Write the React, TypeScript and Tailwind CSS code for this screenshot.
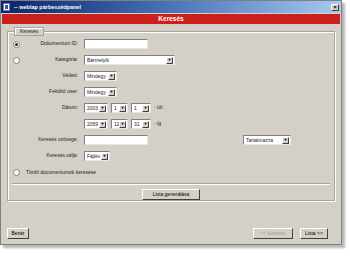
import type { ReactNode } from "react";

function Radio({ checked = false }: { checked?: boolean }) {
  return (
    <span className="flex h-[7px] w-[7px] items-center justify-center rounded-full border border-[#808080] bg-white">
      {checked && <span className="h-[3px] w-[3px] rounded-full bg-[#222]" />}
    </span>
  );
}

function Select({ value, w }: { value: string; w: string }) {
  return (
    <div className={`flex h-[10px] items-center border border-t-[#808080] border-l-[#808080] border-r-[#e8e6e0] border-b-[#e8e6e0] bg-white ${w}`}>
      <span className="flex-1 overflow-hidden whitespace-nowrap pl-[2px] leading-none">{value}</span>
      <span className="mr-px flex h-[7px] w-[7px] shrink-0 items-center justify-center border border-t-white border-l-white border-r-[#404040] border-b-[#404040] bg-[#d4d0c8] text-[4px] leading-none text-black">
        ▼
      </span>
    </div>
  );
}

function TextInput({ w }: { w: string }) {
  return (
    <div className={`h-[10px] border border-t-[#808080] border-l-[#808080] border-r-[#e8e6e0] border-b-[#e8e6e0] bg-white ${w}`} />
  );
}

function Row({ radio, label, children }: { radio?: "on" | "off"; label: string; children?: ReactNode }) {
  return (
    <div className="flex h-[16px] items-center">
      <div className="flex w-[9px] justify-center">{radio && <Radio checked={radio === "on"} />}</div>
      <div className="w-[57px] text-right">{label}</div>
      <div className="ml-[6px] flex items-center gap-[3px]">{children}</div>
    </div>
  );
}

function Button({ children, disabled = false, w }: { children: ReactNode; disabled?: boolean; w: string }) {
  return (
    <button
      className={`flex h-[11px] items-center justify-center border border-t-white border-l-white border-r-[#404040] border-b-[#404040] bg-[#d4d0c8] leading-none ${w} ${disabled ? "text-[#a09c94]" : "text-black"}`}
    >
      {children}
    </button>
  );
}

export default function App() {
  return (
    <div className="h-[256px] w-[350px] bg-white font-['Liberation_Sans',Arial,sans-serif] text-[5px] text-[#222]">
      <div className="flex h-[245px] w-[342px] flex-col border border-[#808080] bg-[#d4d0c8] shadow-[3px_3px_2px_#b8b8b8]">
        <div className="flex h-[12px] items-center bg-gradient-to-r from-[#0a246a] via-[#4a74b8] to-[#a6caf0] px-[2px]">
          <span className="flex h-[8px] w-[7px] items-center justify-center border border-[#6b7fa8] bg-white">
            <span className="h-[4px] w-[3px] bg-[#2e56a8]" />
          </span>
          <span className="ml-[4px] text-[5.5px] font-bold text-white">-- weblap párbeszédpanel</span>
          <span className="ml-auto flex h-[7px] w-[8px] items-center justify-center border border-t-white border-l-white border-r-[#404040] border-b-[#404040] bg-[#d4d0c8] text-[6px] font-bold leading-none text-black">
            ×
          </span>
        </div>
        <div className="mx-px mt-px flex h-[10px] items-center justify-center bg-[#c9201d] text-[6.5px] font-bold text-white">
          Keresés
        </div>
        <div className="flex flex-1 flex-col px-[6px]">
          <fieldset className="mt-[3px] h-[174px] border border-[#a8a49c] px-[4px] shadow-[inset_1px_1px_0_#fff,1px_1px_0_#fff]">
            <legend className="ml-[2px] border border-[#a8a49c] bg-[#d4d0c8] px-[5px] leading-[7px] shadow-[inset_1px_1px_0_#fff]">
              Keresés
            </legend>
            <Row radio="on" label="Dokumentum ID:">
              <TextInput w="w-[64px]" />
            </Row>
            <Row radio="off" label="Kategória:">
              <Select value="Bármelyik" w="w-[91px]" />
            </Row>
            <Row label="Védett:">
              <Select value="Mindegy" w="w-[33px]" />
            </Row>
            <Row label="Feltöltő user:">
              <Select value="Mindegy" w="w-[33px]" />
            </Row>
            <Row label="Dátum:">
              <Select value="2003" w="w-[24px]" />
              <Select value="1" w="w-[17px]" />
              <Select value="1" w="w-[20px]" />
              <span>- tól</span>
            </Row>
            <Row label="">
              <Select value="2059" w="w-[24px]" />
              <Select value="12" w="w-[17px]" />
              <Select value="31" w="w-[20px]" />
              <span>- ig</span>
            </Row>
            <div className="flex h-[16px] items-center">
              <Row label="Keresés szövege:">
                <TextInput w="w-[64px]" />
              </Row>
              <div className="ml-[95px]">
                <Select value="Tartalmazza" w="w-[48px]" />
              </div>
            </div>
            <Row label="Keresés célja:">
              <Select value="Fájlév" w="w-[26px]" />
            </Row>
            <div className="flex h-[17px] items-center">
              <div className="flex w-[9px] justify-center">
                <Radio />
              </div>
              <span className="ml-[5px]">Törölt documentumok keresése</span>
            </div>
            <div className="mt-[2px] h-[2px] border-t border-b border-t-[#a8a49c] border-b-white" />
            <div className="mt-[4px] flex justify-center">
              <Button w="w-[58px]">Lista generálása</Button>
            </div>
          </fieldset>
          <div className="mt-auto mb-[5px] flex items-center">
            <Button w="w-[22px]">Bezár</Button>
            <div className="ml-auto flex gap-[7px] pr-[7px]">
              <Button disabled w="w-[40px]">&lt;&lt; Keresés</Button>
              <Button w="w-[28px]">Lista &gt;&gt;</Button>
            </div>
          </div>
        </div>
      </div>
    </div>
  );
}
